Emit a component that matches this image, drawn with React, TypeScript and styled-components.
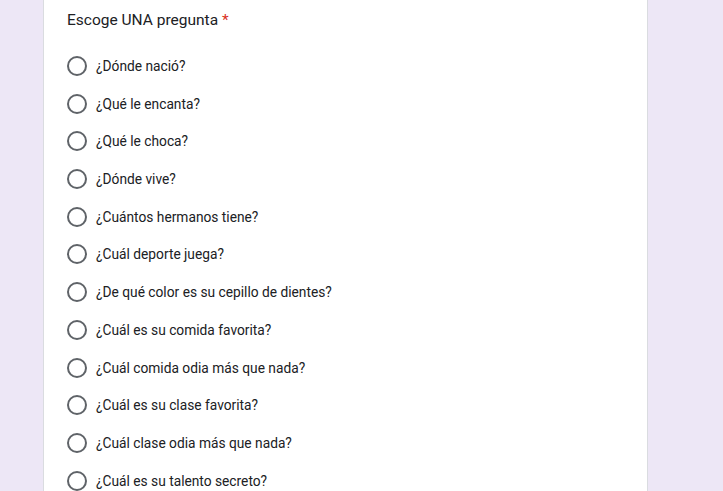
import styled, { createGlobalStyle } from "styled-components";

const questions = [
    "¿Dónde nació?",
    "¿Qué le encanta?",
    "¿Qué le choca?",
    "¿Dónde vive?",
    "¿Cuántos hermanos tiene?",
    "¿Cuál deporte juega?",
    "¿De qué color es su cepillo de dientes?",
    "¿Cuál es su comida favorita?",
    "¿Cuál comida odia más que nada?",
    "¿Cuál es su clase favorita?",
    "¿Cuál clase odia más que nada?",
    "¿Cuál es su talento secreto?",
];

const GlobalStyle = createGlobalStyle`
    html, body {
        margin: 0;
        padding: 0;
        background: #ede7f6;
        overflow: hidden;
    }
    body {
        font-family: Roboto, "Liberation Sans", Arial, sans-serif;
    }
`;

const Page = styled.div`
    display: flex;
    height: 491px;
    overflow: hidden;
    background: #ede7f6;
`;

const Card = styled.div`
    margin-left: 43px;
    width: 605px;
    background: #fff;
    border-left: 1px solid #dadce0;
    border-right: 1px solid #dadce0;
    padding: 8px 0 0 23px;
    box-sizing: border-box;
`;

const Title = styled.div`
    font-size: 15.5px;
    line-height: 24px;
    color: #202124;
    margin-bottom: 15px;
`;

const Required = styled.span`
    color: #d93025;
    margin-left: 4px;
`;

const Options = styled.div`
    display: flex;
    flex-direction: column;
`;

const Option = styled.label`
    display: flex;
    align-items: center;
    height: 37.73px;
    gap: 9px;
    font-size: 13.75px;
    color: #202124;
`;

const Radio = styled.span`
    width: 20px;
    height: 20px;
    box-sizing: border-box;
    border: 2px solid #5f6368;
    border-radius: 50%;
    flex-shrink: 0;
`;

const App = () => {
    return (
        <>
            <GlobalStyle />
            <Page>
                <Card>
                    <Title>
                        Escoge UNA pregunta<Required>*</Required>
                    </Title>
                    <Options>
                        {questions.map((q) => (
                            <Option key={q}>
                                <Radio />
                                {q}
                            </Option>
                        ))}
                    </Options>
                </Card>
            </Page>
        </>
    );
};

export default App;
